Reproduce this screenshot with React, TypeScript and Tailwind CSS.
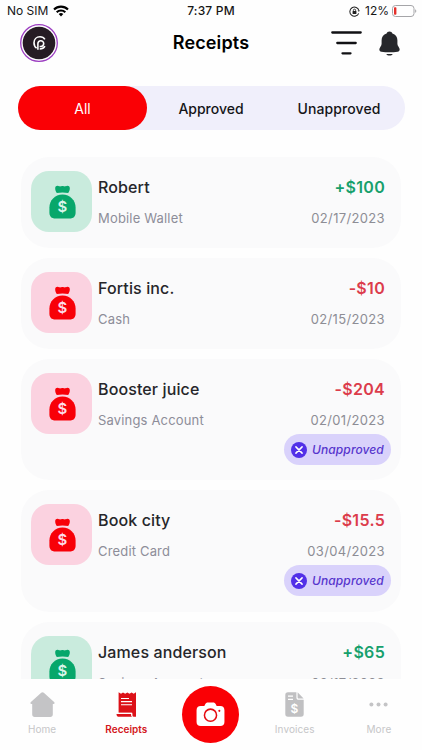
import React from 'react';

interface Receipt {
  name: string;
  account: string;
  amount: string;
  date: string;
  income: boolean;
  unapproved?: boolean;
}

const receipts: Receipt[] = [
  { name: 'Robert', account: 'Mobile Wallet', amount: '+$100', date: '02/17/2023', income: true },
  { name: 'Fortis inc.', account: 'Cash', amount: '-$10', date: '02/15/2023', income: false },
  { name: 'Booster juice', account: 'Savings Account', amount: '-$204', date: '02/01/2023', income: false, unapproved: true },
  { name: 'Book city', account: 'Credit Card', amount: '-$15.5', date: '03/04/2023', income: false, unapproved: true },
  { name: 'James anderson', account: 'Savings Account', amount: '+$65', date: '02/17/2023', income: true },
];

const MoneyBag: React.FC<{ income: boolean }> = ({ income }) => (
  <div
    className={`shrink-0 flex items-center justify-center w-[61px] h-[61px] rounded-[18px] ${income ? 'bg-[#c9ebdd] text-[#07a76b]' : 'bg-[#fbd2e0] text-[#f80008]'}`}
  >
    <svg viewBox="0 0 27 34" className="w-[27px] h-[34px] ml-[1px]" fill="currentColor">
      <path d="M7.800 7.900C6.600 6.300 6.100 4.600 6.200 3 6.300 1.600 7.400.7 8.700.8c1.100.1 1.600.7 2.500.7.800 0 1.300-.4 2.300-.4s1.500.4 2.300.4c.9 0 1.400-.6 2.500-.7 1.300-.1 2.400.8 2.500 2.200.1 1.600-.4 3.300-1.600 4.900-3.500-.7-7.900-.7-11.400 0Z" />
      <path d="M13.500 9.600c7.600 0 13.100 6.200 13.100 12.900v5c0 3.900-2.100 6-6 6H6.400c-3.900 0-6-2.100-6-6v-5c0-6.700 5.500-12.900 13.100-12.900Z" />
      <text
        x="13.300"
        y="26.900"
        textAnchor="middle"
        className={`font-semibold text-[15px] ${income ? 'fill-[#d9f5ea]' : 'fill-[#fddbe7]'}`}
      >
        $
      </text>
    </svg>
  </div>
);

const UnapprovedBadge: React.FC = () => (
  <div className="mt-[5px] flex items-center w-[107px] h-[31px] pl-[7px] rounded-full bg-[#d9d2fb] text-[#5635cd]">
    <svg viewBox="0 0 16 16" className="w-4 h-4 shrink-0">
      <circle cx="8" cy="8" r="8" fill="#5230e8" />
      <path d="m4.900 4.900 6.200 6.200m0-6.200-6.200 6.200" stroke="#fff" strokeWidth="1.500" strokeLinecap="round" />
    </svg>
    <span className="ml-[5px] text-[12px] leading-none font-medium italic tracking-[0.100px]">Unapproved</span>
  </div>
);

const ReceiptCard: React.FC<{ receipt: Receipt }> = ({ receipt }) => (
  <div
    className={`shrink-0 flex items-start pl-[10px] pr-[10px] rounded-[28px] bg-[#fafafb] ${receipt.unapproved ? 'h-[121.400px]' : 'h-[91px]'}`}
  >
    <div className="pt-[14px]">
      <MoneyBag income={receipt.income} />
    </div>
    <div className="pt-[18px] ml-[6px] whitespace-nowrap">
      <div className="text-[16px] leading-6 font-medium tracking-[0.120px] text-[#26262a]">{receipt.name}</div>
      <div className="mt-[10px] text-[13px] leading-[18px] tracking-[0.170px] text-[#8d8d99]">{receipt.account}</div>
    </div>
    <div className="pt-[18px] ml-auto flex flex-col items-end whitespace-nowrap">
      <div
        className={`pr-[6px] text-[16px] leading-6 font-semibold tracking-[0.300px] ${receipt.income ? 'text-[#16a06c]' : 'text-[#dc3c4c]'}`}
      >
        {receipt.amount}
      </div>
      <div className="mt-[10px] pr-[6px] text-[13px] leading-[18px] tracking-[0.350px] text-[#8d8d95]">{receipt.date}</div>
      {receipt.unapproved && <UnapprovedBadge />}
    </div>
  </div>
);

const StatusBar: React.FC = () => (
  <div className="relative flex items-center h-[22px] pl-[7px] pr-[5px] text-[12px] text-[#161616]">
    <span>No SIM</span>
    <svg viewBox="0 0 16 12" className="w-[16px] h-[12px] ml-[5px]" fill="none" stroke="#000" strokeWidth="2.100">
      <path d="M1 4.500a10 10 0 0 1 14 0" />
      <path d="M3.700 7.300a6.100 6.100 0 0 1 8.600 0" />
      <path d="m8 11.500-2.300-2.400a3.300 3.300 0 0 1 4.600 0Z" fill="#000" stroke="none" />
    </svg>
    <span className="absolute left-0 right-0 text-center font-medium tracking-[0.200px]">7:37 PM</span>
    <svg viewBox="0 0 12 12" className="w-[11px] h-[11px] ml-auto mr-[5px]" fill="none" stroke="#222">
      <path d="M10.800 5A5 5 0 1 0 10.600 8" strokeWidth="1.100" />
      <path d="m9.300 5.200 1.600 1.200.9-1.700Z" fill="#222" stroke="none" />
      <rect x="3.900" y="5.400" width="4.200" height="3.200" rx=".4" fill="#222" stroke="none" />
      <path d="M4.800 5.500V4.600a1.200 1.200 0 0 1 2.400 0v.9" strokeWidth=".9" />
    </svg>
    <span>12%</span>
    <svg viewBox="0 0 25 12" className="w-[25px] h-[12px] ml-[3px]">
      <rect x=".5" y=".5" width="21.500" height="11" rx="3" fill="none" stroke="#a5a5a8" />
      <rect x="2" y="2.200" width="2.400" height="7.600" rx=".8" fill="#e5302b" />
      <path d="M23.300 4.200c1.300.5 1.300 3.100 0 3.600Z" fill="#929295" />
    </svg>
  </div>
);

const Header: React.FC = () => (
  <div className="relative h-[42px] flex items-center justify-between pl-[20px] pr-[22px]">
    <svg viewBox="0 0 38 38" className="w-[38px] h-[38px]" fill="none">
      <circle cx="19" cy="19" r="18.300" stroke="#9c3fc1" strokeWidth="1.300" />
      <circle cx="19" cy="19" r="16.300" fill="#261c24" />
      <g stroke="#fff" strokeWidth="1.600">
        <path d="M24.900 15.400c-1-1.700-2.800-2.600-4.900-2.600-3.500 0-6 2.600-6 6 0 2.400 1 4.300 2.600 5.400" />
        <path d="M17.900 25.800v-6.100a2.900 2.900 0 1 1 2.900 2.800h-1.200" />
        <path d="M19.700 25c2.500 0 4.200-1 5.200-2.900" />
      </g>
    </svg>
    <h1 className="absolute left-[50px] right-[50px] text-center text-[18px] leading-6 font-semibold tracking-[0.150px] text-black">
      Receipts
    </h1>
    <div className="flex items-center">
      <svg viewBox="0 0 31 24" className="w-[31px] h-[24px] mr-[17px]" stroke="#111114" strokeWidth="2.300" strokeLinecap="round">
        <path d="M1.300 1.500h28.400M6.300 12h18.400M11.500 22.300h8" />
      </svg>
      <svg viewBox="0 0 21 25" className="w-[21px] h-[25px]" fill="#26272b">
        <path d="M10.500.6c-1.500 0-2.600.7-2.900 2C4.400 3.500 2.600 6 2.600 9.300v3.500c0 1-.4 1.800-1 2.700l-.8 1.500c-1 1.700-.3 3.400 1.600 3.800 5 .7 11.200.7 16.200 0 1.900-.4 2.600-2.100 1.600-3.800l-.8-1.500c-.6-.9-1-1.700-1-2.700V9.300c0-3.300-1.800-5.800-5-6.700-.3-1.300-1.400-2-2.900-2Z" />
        <path d="M7.300 22.900h6.400c-.5 1.100-1.700 1.700-3.200 1.700s-2.700-.6-3.200-1.700Z" />
      </svg>
    </div>
  </div>
);

const Tabs: React.FC = () => (
  <div className="ml-[18px] mr-[17px] mt-[22px] h-[44px] grid grid-cols-3 rounded-full bg-[#f0effb] text-[14px] font-medium text-[#151518]">
    <button className="rounded-full bg-[#fa0005] text-white font-normal">All</button>
    <button className="pr-[1px]">Approved</button>
    <button className="pr-[3px] tracking-[0.100px]">Unapproved</button>
  </div>
);

const BottomNav: React.FC = () => (
  <nav className="shrink-0 h-[71px] pr-[1px] grid grid-cols-5 bg-[#fefefe] text-[10px] text-[#c6c6c8]">
    <div className="flex flex-col items-center pt-[13px]">
      <svg viewBox="0 0 25 25" className="w-[25px] h-[25px]" fill="#c4c4c6">
        <path d="M11.200.8c.8-.7 1.800-.7 2.600 0l10.300 9.300c.9.900.6 2-.6 2H22.800v10.400c0 1.600-.9 2.500-2.500 2.500H4.700c-1.600 0-2.500-.9-2.500-2.500V12.100H1.500c-1.200 0-1.500-1.100-.6-2Z" />
      </svg>
      <span className="mt-[5px] leading-[14px] tracking-[0.100px]">Home</span>
    </div>
    <div className="flex flex-col items-center pt-[13px] text-[#d31620]">
      <svg viewBox="0 0 21 25" className="w-[21px] h-[25px]" fill="#dc1118">
        <path d="M2.600.3 5 1.700 7 .5l2.200 1.200L11.300.5l2.200 1.200L15.600.5l2.100 1.200 2.300-1.400v24.400h-2.200c-1.300 0-1.600-.9-1.600-2.100v-1.900H2.600Z" />
        <path d="M.5 21.900h14.600c0 1.300.3 2.200.8 2.900H3c-1.700 0-2.500-1.200-2.500-2.900Z" />
        <path d="M.5 21.300h15.300v2.400" fill="none" stroke="#fefefe" strokeWidth=".9" />
        <path d="M5 6.500h8M5 9.600h11M5 12.700h11" stroke="#fff" strokeWidth="1.100" />
      </svg>
      <span className="mt-[5px] leading-[14px] font-semibold">Receipts</span>
    </div>
    <div className="flex justify-center pt-[7px]">
      <div className="w-[57px] h-[57px] rounded-full bg-[#fa0005] flex items-center justify-center">
        <svg viewBox="0 0 30 26" className="w-[29px] h-[25px]">
          <path d="M9.500 2.300C10.100 1 11 .5 12.300.5h5.400c1.300 0 2.200.5 2.800 1.800l.9 1.900h3.800c2.700 0 4.300 1.600 4.300 4.300v12.200c0 2.700-1.600 4.300-4.300 4.300H4.800C2.100 25 .5 23.400.5 20.700V8.500c0-2.700 1.600-4.300 4.300-4.300h3.800Z" fill="#fff" />
          <circle cx="15" cy="13.700" r="6.300" fill="none" stroke="#e60a10" strokeWidth="1.600" />
          <circle cx="24.200" cy="9.200" r="1.100" fill="#e60a10" />
        </svg>
      </div>
    </div>
    <div className="flex flex-col items-center pt-[13px]">
      <svg viewBox="0 0 19 25" className="w-[19px] h-[25px]" fill="#c0c0c2">
        <path d="M3 .3h8.400v5.100c0 1.500.8 2.300 2.300 2.300h5v14.300c0 1.800-.9 2.700-2.700 2.700H3C1.200 24.700.3 23.800.3 22V3C.3 1.200 1.200.3 3 .3Z" />
        <path d="m12.600.3 6 6.200h-4.800c-.8 0-1.200-.4-1.200-1.200Z" />
        <path d="M3 4.200h5M3 7.400h5" stroke="#fff" strokeWidth="1.300" />
        <text x="9.500" y="20.900" textAnchor="middle" className="font-semibold text-[12px] fill-white">
          $
        </text>
      </svg>
      <span className="mt-[5px] leading-[14px] tracking-[0.100px]">Invoices</span>
    </div>
    <div className="flex flex-col items-center pt-[13px]">
      <svg viewBox="0 0 19 25" className="w-[19px] h-[25px]" fill="#c4c4c6">
        <circle cx="2.400" cy="12.500" r="2" />
        <circle cx="9.500" cy="12.500" r="2" />
        <circle cx="16.600" cy="12.500" r="2" />
      </svg>
      <span className="mt-[5px] leading-[14px] tracking-[0.100px]">More</span>
    </div>
  </nav>
);

export default function App() {
  return (
    <div className="w-[422px] h-[750px] overflow-hidden flex flex-col bg-[#fefefe] font-['Inter',sans-serif]">
      <StatusBar />
      <Header />
      <Tabs />
      <div className="mt-[27px] flex-1 min-h-0 overflow-hidden flex flex-col gap-[10px] px-[21px]">
        {receipts.map((receipt) => (
          <ReceiptCard key={receipt.name} receipt={receipt} />
        ))}
      </div>
      <BottomNav />
    </div>
  );
}
